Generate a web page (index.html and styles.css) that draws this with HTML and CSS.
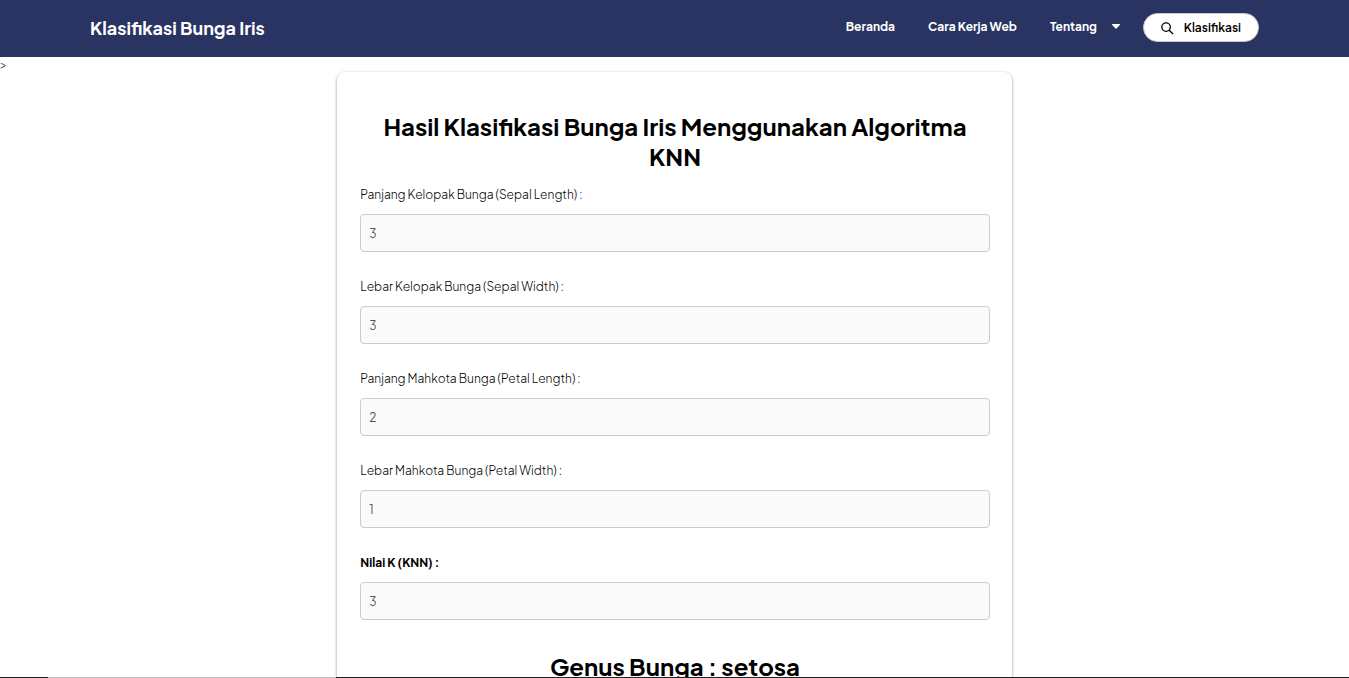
FILE: index.html
```html
<!DOCTYPE html>
<html lang="id">
<head>
<meta charset="utf-8">
<meta name="viewport" content="width=device-width, initial-scale=1">
<title>Klasifikasi Bunga Iris</title>
<link rel="stylesheet" href="styles.css">
</head>
<body>
<header class="navbar">
  <a class="brand" href="#">Klasifikasi Bunga Iris</a>
  <nav class="menu">
    <a class="menu-link" href="#">Beranda</a>
    <a class="menu-link" href="#">Cara Kerja Web</a>
    <a class="menu-link menu-drop" href="#">Tentang
      <svg class="caret" viewBox="0 0 8 5" aria-hidden="true"><path d="M.6 0h6.8c.6 0 .8.6.4 1L4.5 4.6a.7.7 0 0 1-1 0L.2 1C-.2.6 0 0 .6 0z"/></svg>
    </a>
    <a class="menu-button" href="#">
      <svg class="search" viewBox="0 0 14 14" aria-hidden="true"><circle cx="5.5" cy="5.5" r="4.6"/><path d="M8.8 8.8 13 13"/></svg>
      Klasifikasi
    </a>
  </nav>
</header>
<main class="content">
  <span class="stray">&gt;</span>
  <form class="card">
    <h1 class="title">Hasil Klasifikasi Bunga Iris Menggunakan Algoritma KNN</h1>
    <div class="field">
      <label class="label" for="sepal-length">Panjang Kelopak Bunga (Sepal Length) :</label>
      <input class="input" id="sepal-length" type="text" value="3" readonly>
    </div>
    <div class="field">
      <label class="label" for="sepal-width">Lebar Kelopak Bunga (Sepal Width) :</label>
      <input class="input" id="sepal-width" type="text" value="3" readonly>
    </div>
    <div class="field">
      <label class="label" for="petal-length">Panjang Mahkota Bunga (Petal Length) :</label>
      <input class="input" id="petal-length" type="text" value="2" readonly>
    </div>
    <div class="field">
      <label class="label" for="petal-width">Lebar Mahkota Bunga (Petal Width) :</label>
      <input class="input" id="petal-width" type="text" value="1" readonly>
    </div>
    <div class="field">
      <label class="label label-strong" for="k-value">Nilai K (KNN) :</label>
      <input class="input" id="k-value" type="text" value="3" readonly>
    </div>
    <h2 class="title result">Genus Bunga : setosa</h2>
  </form>
</main>
<div class="edge" aria-hidden="true"><span class="edge-light"></span></div>
</body>
</html>
```

FILE: styles.css
```css
* { box-sizing: border-box; }

body {
  display: flex;
  flex-direction: column;
  height: 100vh;
  margin: 0;
  background: #fff;
  color: #000;
  font-family: "Plus Jakarta Sans", Inter, "Open Sans", sans-serif;
  font-size: 12px;
}

a { color: inherit; text-decoration: none; }

.navbar {
  display: flex;
  flex: none;
  align-items: center;
  justify-content: space-between;
  min-height: 57px;
  padding: 0 90px 2px;
  background: #293462;
  color: #fff;
}

.brand { font-size: 18px; font-weight: 700; line-height: 24px; }

.menu {
  display: flex;
  align-items: center;
  gap: 33px;
  line-height: 18px;
}

.menu-link { padding-bottom: 2px; font-weight: 700; }

.menu-drop {
  display: flex;
  align-items: center;
  gap: 15px;
  margin-right: -10px;
}

.caret { width: 8px; height: 5px; fill: currentColor; }

.menu-button {
  display: flex;
  align-items: center;
  gap: 10px;
  padding: 5px 17px 4px;
  border: 1px solid #c8c8c8;
  border-radius: 16px;
  background: #fff;
  color: #000;
  font-weight: 600;
}

.search {
  width: 13px;
  height: 13px;
  fill: none;
  stroke: currentColor;
  stroke-width: 1.4;
}

.content {
  display: grid;
  flex: 1;
  grid-template-columns: 1fr 2fr 1fr;
  align-items: start;
  min-height: 0;
  overflow-y: auto;
  scrollbar-width: none;
}

.stray { color: #333; font-size: 12px; font-weight: 300; line-height: 16px; }

.card {
  margin: 15px 0;
  padding: 39px 22px 24px 23px;
  border-radius: 8px;
  background: #fff;
  box-shadow: 0 1px 3px rgba(0, 0, 0, 0.45);
}

.title {
  margin: 0 0 15px;
  font-size: 24px;
  font-weight: 700;
  line-height: 30px;
  text-align: center;
}

.field { margin-bottom: 26px; }

.label {
  display: block;
  margin-bottom: 10px;
  font-weight: 300;
  line-height: 18px;
}

.label-strong { font-weight: 700; }

.input {
  display: block;
  width: 100%;
  height: 38px;
  padding: 0 8px;
  border: 1px solid #ccc;
  border-radius: 4px;
  background: #fafafa;
  color: #555;
  font: inherit;
}

.result { margin: 31px 0 0; }

.edge {
  display: grid;
  flex: none;
  grid-template-columns: 48px 288px 1fr;
  height: 1px;
  background: #231f20;
}

.edge-light { grid-column: 2; background: #c0c0c0; }
```
